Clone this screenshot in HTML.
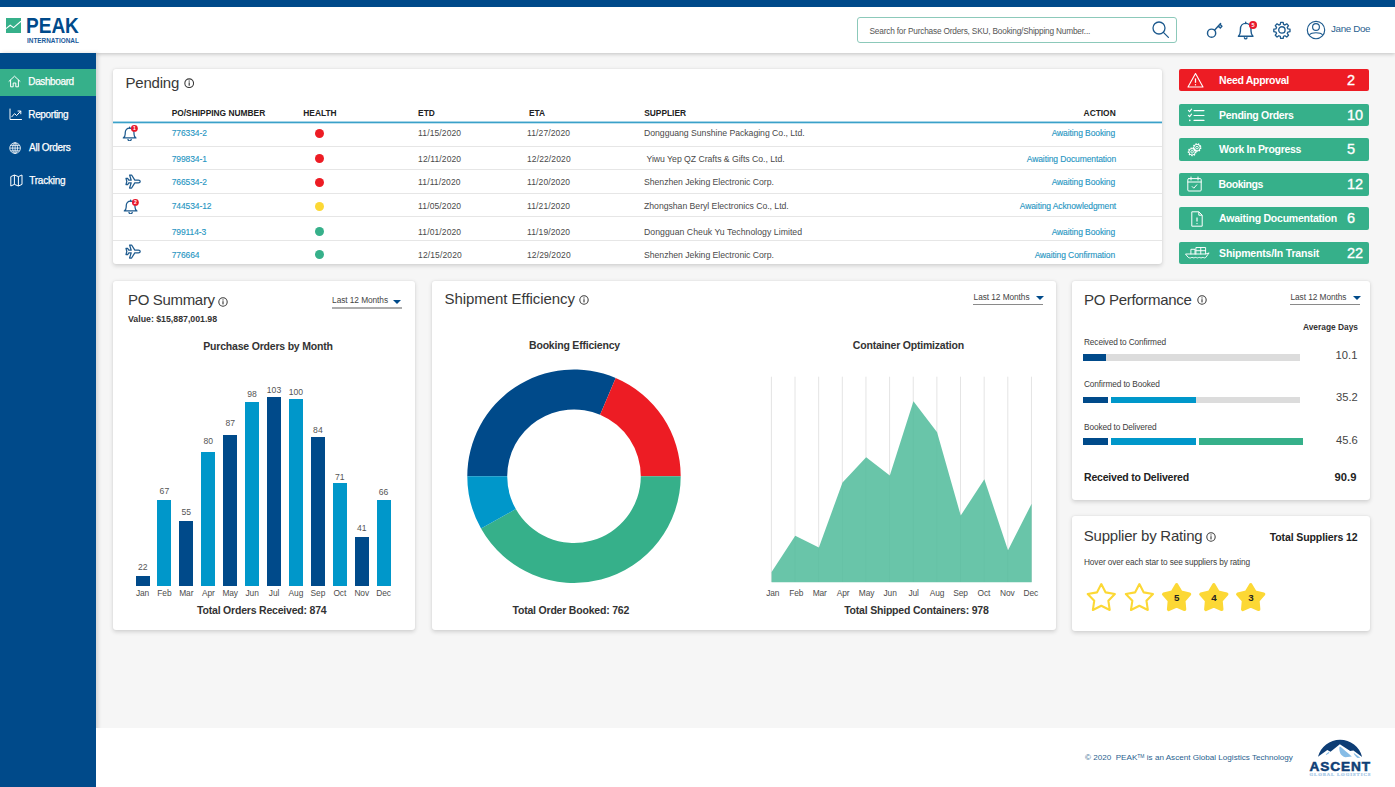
<!DOCTYPE html>
<html>
<head>
<meta charset="utf-8">
<title>PEAK Dashboard</title>
<style>
*{box-sizing:border-box;margin:0;padding:0}
html,body{width:1395px;height:787px;overflow:hidden}
body{position:relative;background:#f6f6f6;font-family:"Liberation Sans",sans-serif;color:#333;font-size:8px}
.a{position:absolute}
.t{position:absolute;white-space:nowrap;line-height:1;transform:translateY(-50%)}
.tr{position:absolute;white-space:nowrap;line-height:1;transform:translate(-100%,-50%)}
.tc{position:absolute;white-space:nowrap;line-height:1;transform:translate(-50%,-50%)}
.b{font-weight:bold}
.card{position:absolute;background:#fff;border-radius:3px;box-shadow:0 1.5px 4px rgba(0,0,0,.15),0 0 2px rgba(0,0,0,.06)}
#topbar{left:0;top:0;width:1395px;height:7px;background:#004a8a}
#header{left:0;top:7px;width:1395px;height:46px;background:#fff;box-shadow:0 1px 4px rgba(0,0,0,.22)}
#sidebar{left:0;top:53px;width:96px;height:734px;background:#004a8a;box-shadow:1.5px 0 4px rgba(0,0,0,.15)}
#navact{left:0;top:69px;width:96px;height:27px;background:#36b08a}
.nav{color:#fff;font-size:10px;left:28.3px;letter-spacing:-.38px;-webkit-text-stroke:.25px #fff;margin-top:.3px}
#footer{left:96px;top:728px;width:1299px;height:59px;background:#fff}
.h1{font-size:15px;color:#383838;letter-spacing:-.2px}
.th{font-size:8.4px;font-weight:bold;color:#222;margin-top:.4px}
.td{font-size:8.5px;color:#4a4a4a;margin-top:.1px;letter-spacing:-.05px}
.dt{letter-spacing:.12px}
.su{font-size:8.7px;letter-spacing:-.03px}
.po{letter-spacing:-.27px}
.lk{font-size:8.5px;color:#1f95c2;margin-top:.1px;letter-spacing:-.1px;-webkit-text-stroke:.12px #1f95c2}
.sep{position:absolute;left:113px;width:1049px;height:1.4px;background:#e6e6e6;margin-top:-.3px}
.dot{position:absolute;width:9px;height:9px;border-radius:50%;left:315px}
.btn{position:absolute;left:1178.5px;width:190.7px;height:22.8px;border-radius:2px;background:#36b08a}
.btn .t{color:#fff;top:10.9px}
.bl{left:40.6px;font-size:10.5px;font-weight:bold;letter-spacing:-.3px}
.bn{left:168.4px;font-size:14.5px;-webkit-text-stroke:.35px #fff}
.sel{font-size:8.3px;color:#444;margin-top:.4px;margin-left:.3px;letter-spacing:-.06px}
.ul{position:absolute;height:1.2px;background:#8a8a8a;margin-top:.5px}
.tri{position:absolute;width:0;height:0;border-left:4px solid transparent;border-right:4px solid transparent;border-top:4.6px solid #004a8a;margin-top:-3px;margin-left:1.4px}
.ct{font-size:10.5px;font-weight:bold;color:#333;letter-spacing:-.2px;margin-top:-.5px}
.mo{font-size:8.4px;color:#4c4c4c;letter-spacing:-.1px}
.bv{font-size:8.6px;color:#555}
.bar{position:absolute;width:14px}
.db{background:#004a8a}
.lb{background:#0097ca}
</style>
</head>
<body>
<div class="a" id="header"></div>
<div class="a" id="topbar"></div>
<div class="a" id="sidebar"></div>
<div class="a" id="navact"></div>
<div class="a" id="footer"></div>

<!-- LOGO -->
<svg class="a" style="left:6px;top:18px" width="15" height="15" viewBox="0 0 15 15"><rect width="15" height="15" fill="#36b08a"/><path d="M0 10.6 L4.2 7.2 L7.6 9.6 L15 3.2" fill="none" stroke="#fff" stroke-width="1.1"/></svg>
<div class="a b" id="peak" style="left:26px;top:14.2px;font-size:21.5px;line-height:21.5px;color:#004a8a;white-space:nowrap;transform:scaleX(.885);transform-origin:0 0;left:25.6px;top:15.9px">PEAK</div>
<div class="a b" id="intl" style="left:26.8px;top:36.9px;font-size:7px;line-height:7px;color:#1a5a9a;white-space:nowrap;transform:scaleX(.915);transform-origin:0 0">INTERNATIONAL</div>
<!-- NAV -->
<div class="t nav" style="top:82px">Dashboard</div>
<div class="t nav" style="top:115px">Reporting</div>
<div class="t nav" style="top:148px;left:29.1px;letter-spacing:-.3px">All Orders</div>
<div class="t nav" style="top:181px;left:29.2px;letter-spacing:-.22px">Tracking</div>
<svg class="a" style="left:8px;top:75px" width="13" height="13" viewBox="0 0 13 13" fill="none" stroke="#fff" stroke-width="1" stroke-linejoin="round" stroke-linecap="round"><path d="M1 6.3 L6.5 1.2 L12 6.3"/><path d="M2.6 5.2 V11.8 H5.2 V8 H7.8 V11.8 H10.4 V5.2"/></svg>
<svg class="a" style="left:9px;top:108px" width="13" height="13" viewBox="0 0 13 13" fill="none" stroke="#fff" stroke-width="1" stroke-linejoin="round" stroke-linecap="round"><path d="M1 1 V11.5 H12.5"/><path d="M2.8 8.8 L5.6 5.6 L7.6 7.6 L11.6 3.2"/><path d="M9 3 H11.8 V5.8"/></svg>
<svg class="a" style="left:8.6px;top:141.6px" width="12.2" height="12.2" viewBox="0 0 13 13" fill="none" stroke="#fff" stroke-width=".85"><circle cx="6.5" cy="6.5" r="5.7"/><ellipse cx="6.5" cy="6.5" rx="2.6" ry="5.7"/><path d="M6.5 .8 V12.2 M.8 6.5 H12.2 M1.6 3.6 H11.4 M1.6 9.4 H11.4"/></svg>
<svg class="a" style="left:10px;top:174px" width="13" height="13" viewBox="0 0 13 13" fill="none" stroke="#fff" stroke-width="1" stroke-linejoin="round"><path d="M.8 2.6 L4.4 1 L8.4 2.6 L12 1 V10.4 L8.4 12 L4.4 10.4 L.8 12 Z"/><path d="M4.4 1 V10.4 M8.4 2.6 V12"/></svg>
<!-- HEADER-RIGHT -->
<div class="a" style="left:857px;top:17px;width:320px;height:26px;border:1px solid #8cc9ba;border-radius:3px;background:#fff"></div>
<div class="t" style="left:869.5px;top:30.5px;font-size:8.3px;color:#555;letter-spacing:-.2px">Search for Purchase Orders, SKU, Booking/Shipping Number...</div>
<svg class="a" style="left:1151px;top:20px" width="19" height="19" viewBox="0 0 19 19" fill="none" stroke="#1d5a8e" stroke-width="1.3" stroke-linecap="round"><circle cx="8" cy="8" r="6"/><path d="M12.4 12.4 L17.4 17.4"/></svg>
<svg class="a" style="left:1206px;top:20.5px" width="18" height="18" viewBox="0 0 18 18" fill="none" stroke="#1d5a8e" stroke-width="1.45" stroke-linecap="round" stroke-linejoin="round"><circle cx="5.6" cy="12.2" r="4.1"/><path d="M8.5 9.3 L14.6 2.6 M12.4 5 L14.3 6.9 L15.9 5.2 L14 3.3"/></svg>
<svg class="a" style="left:1237.2px;top:20.6px" width="19.4" height="19" viewBox="0 0 19 19" fill="none" stroke="#1d5a8e" stroke-width="1.4" stroke-linecap="round" stroke-linejoin="round"><path d="M1.2 15.2 H15.8 C14.4 13.8 13.8 12.2 13.8 10 V8.4 C13.8 4.8 11.6 2.4 8.5 2.4 C5.4 2.4 3.2 4.8 3.2 8.4 V10 C3.2 12.2 2.6 13.8 1.2 15.2 Z"/><path d="M7.2 16.8 C7.6 18.2 9.4 18.2 9.8 16.8 M8.5 2.6 V1.2"/></svg>
<svg class="a" style="left:1248.0px;top:20.0px" width="10.0" height="10.0" viewBox="0 0 10.0 10.0"><circle cx="5.00" cy="5.00" r="4" fill="#e8182a"/><text x="5.00" y="7.02" text-anchor="middle" font-family="Liberation Sans, sans-serif" font-weight="bold" font-size="5.6" fill="#fff">5</text></svg>

<svg class="a" style="left:1272.8px;top:20.9px" width="17.8" height="17.8" viewBox="0 0 24 24" fill="none" stroke="#1d5a8e" stroke-width="1.8" stroke-linejoin="round"><circle cx="12" cy="12" r="4.3"/><path d="M10.3 1.8 h3.4 l.5 2.9 l1.9 .8 l2.4 -1.7 l2.4 2.4 l-1.7 2.4 l.8 1.9 l2.9 .5 v3.4 l-2.9 .5 l-.8 1.9 l1.7 2.4 l-2.4 2.4 l-2.4 -1.7 l-1.9 .8 l-.5 2.9 h-3.4 l-.5 -2.9 l-1.9 -.8 l-2.4 1.7 l-2.4 -2.4 l1.7 -2.4 l-.8 -1.9 l-2.9 -.5 v-3.4 l2.9 -.5 l.8 -1.9 l-1.7 -2.4 l2.4 -2.4 l2.4 1.7 l1.9 -.8 z"/></svg>
<svg class="a" style="left:1306.1px;top:19.7px" width="20" height="20" viewBox="0 0 20 20" fill="none" stroke="#1d5a8e" stroke-width="1.15"><circle cx="10" cy="10" r="8.7"/><circle cx="10" cy="7" r="3.4"/><path d="M3.5 14.9 C5.6 12 14.4 12 16.5 14.9"/></svg>
<div class="t" style="left:1331px;top:29.4px;font-size:9.8px;color:#2a5f8f;letter-spacing:-.35px">Jane Doe</div>
<!-- PENDING -->
<div class="card" style="left:113px;top:69px;width:1049px;height:195px"></div>
<div class="t h1" style="left:125.5px;top:82.1px">Pending</div>
<svg class="a" style="left:184px;top:78.1px" width="10.4" height="10.4" viewBox="0 0 10 10"><circle cx="5" cy="5" r="4.2" fill="none" stroke="#3a3a3a" stroke-width="1.05"/><rect x="4.45" y="4.2" width="1.1" height="3.2" fill="#333"/><rect x="4.45" y="2.4" width="1.1" height="1.1" fill="#333"/></svg>
<div class="t th" style="left:171.7px;top:112.3px">PO/SHIPPING NUMBER</div>
<div class="t th" style="left:303.3px;top:112.3px">HEALTH</div>
<div class="t th" style="left:418.1px;top:112.3px">ETD</div>
<div class="t th" style="left:529px;top:112.3px">ETA</div>
<div class="t th" style="left:644.2px;top:112.3px">SUPPLIER</div>
<div class="tr th" style="left:1115.7px;top:112.3px">ACTION</div>
<svg class="a" style="left:113px;top:120px" width="1049" height="5" viewBox="0 0 1049 5"><rect x="0" y="1.55" width="1049" height="1.75" fill="#3aa1c9"/></svg>
<div class="sep" style="top:145.8px"></div>
<div class="sep" style="top:169.3px"></div>
<div class="sep" style="top:192.8px"></div>
<div class="sep" style="top:216.3px"></div>
<div class="sep" style="top:239.8px"></div>
<svg class="a" style="left:122px;top:125.6px" width="17" height="15.6" preserveAspectRatio="none" viewBox="0 0 19 19" fill="none" stroke="#1d5a8e" stroke-width="1.4" stroke-linecap="round" stroke-linejoin="round"><path d="M1.4 14.5 H15.6 C14 13.3 13.4 11.9 13.4 9.7 V8.2 C13.4 4.8 11.4 2.6 8.5 2.6 C5.6 2.6 3.6 4.8 3.6 8.2 V9.7 C3.6 11.9 3 13.3 1.4 14.5 Z"/><path d="M6.7 16.3 C7.1 18.6 9.9 18.6 10.3 16.3 M8.5 2.6 V1.4"/></svg>
<svg class="a" style="left:130.1px;top:124.3px" width="8.8" height="8.8" viewBox="0 0 8.8 8.8"><circle cx="4.40" cy="4.40" r="3.4" fill="#e8182a"/><text x="4.40" y="6.20" text-anchor="middle" font-family="Liberation Sans, sans-serif" font-weight="bold" font-size="5" fill="#fff">1</text></svg>

<div class="t lk po" style="left:171.7px;top:133.1px">776334-2</div>
<div class="dot" style="top:129.0px;background:#ed1c24"></div>
<div class="t td dt" style="left:418.1px;top:133.1px">11/15/2020</div>
<div class="t td dt" style="left:527px;top:133.1px">11/27/2020</div>
<div class="t td su" style="left:644px;top:133.1px">Dongguang Sunshine Packaging Co., Ltd.</div>
<div class="tr lk" style="left:1115.1px;top:133.1px">Awaiting Booking</div>
<div class="t lk po" style="left:171.7px;top:158.9px">799834-1</div>
<div class="dot" style="top:153.8px;background:#ed1c24"></div>
<div class="t td dt" style="left:418.1px;top:158.9px">12/11/2020</div>
<div class="t td dt" style="left:527px;top:158.9px">12/22/2020</div>
<div class="t td su" style="left:646.5px;top:158.9px">Yiwu Yep QZ Crafts &amp; Gifts Co., Ltd.</div>
<div class="tr lk" style="left:1116.1px;top:158.9px">Awaiting Documentation</div>
<svg class="a" style="left:125px;top:173.7px" width="16" height="15" viewBox="0 0 16 15" fill="none" stroke="#1d5a8e" stroke-width="1.25" stroke-linejoin="round"><path d="M1 4.4 H2.6 L3.8 6.2 H6.2 L4.6 1 H6.6 L9.8 6.2 H13.4 C14.6 6.2 15.2 6.9 15.2 7.5 C15.2 8.1 14.6 8.8 13.4 8.8 H9.8 L6.6 14 H4.6 L6.2 8.8 H3.8 L2.6 10.6 H1 L1.8 7.5 Z"/></svg>
<div class="t lk po" style="left:171.7px;top:182px">766534-2</div>
<div class="dot" style="top:177.5px;background:#ed1c24"></div>
<div class="t td dt" style="left:418.1px;top:182px">11/11/2020</div>
<div class="t td dt" style="left:527px;top:182px">11/20/2020</div>
<div class="t td su" style="left:644px;top:182px">Shenzhen Jeking Electronic Corp.</div>
<div class="tr lk" style="left:1115.1px;top:182px">Awaiting Booking</div>
<svg class="a" style="left:123.3px;top:198.6px" width="17" height="15.6" preserveAspectRatio="none" viewBox="0 0 19 19" fill="none" stroke="#1d5a8e" stroke-width="1.4" stroke-linecap="round" stroke-linejoin="round"><path d="M1.4 14.5 H15.6 C14 13.3 13.4 11.9 13.4 9.7 V8.2 C13.4 4.8 11.4 2.6 8.5 2.6 C5.6 2.6 3.6 4.8 3.6 8.2 V9.7 C3.6 11.9 3 13.3 1.4 14.5 Z"/><path d="M6.7 16.3 C7.1 18.6 9.9 18.6 10.3 16.3 M8.5 2.6 V1.4"/></svg>
<svg class="a" style="left:131.4px;top:197.7px" width="8.8" height="8.8" viewBox="0 0 8.8 8.8"><circle cx="4.40" cy="4.40" r="3.4" fill="#e8182a"/><text x="4.40" y="6.20" text-anchor="middle" font-family="Liberation Sans, sans-serif" font-weight="bold" font-size="5" fill="#fff">2</text></svg>

<div class="t lk po" style="left:171.7px;top:206.4px">744534-12</div>
<div class="dot" style="top:201.9px;background:#fcd835"></div>
<div class="t td dt" style="left:418.1px;top:206.4px">11/05/2020</div>
<div class="t td dt" style="left:527px;top:206.4px">11/21/2020</div>
<div class="t td su" style="left:644px;top:206.4px">Zhongshan Beryl Electronics Co., Ltd.</div>
<div class="tr lk" style="left:1116.1px;top:206.4px">Awaiting Acknowledgment</div>
<div class="t lk po" style="left:171.7px;top:231.8px">799114-3</div>
<div class="dot" style="top:226.7px;background:#36b08a"></div>
<div class="t td dt" style="left:418.1px;top:231.8px">11/01/2020</div>
<div class="t td dt" style="left:527px;top:231.8px">11/19/2020</div>
<div class="t td su" style="left:644px;top:231.8px"><span style="letter-spacing:.04px">Dongguan Cheuk Yu Technology Limited</span></div>
<div class="tr lk" style="left:1115.1px;top:231.8px">Awaiting Booking</div>
<svg class="a" style="left:125px;top:244.2px" width="16" height="15" viewBox="0 0 16 15" fill="none" stroke="#1d5a8e" stroke-width="1.25" stroke-linejoin="round"><path d="M1 4.4 H2.6 L3.8 6.2 H6.2 L4.6 1 H6.6 L9.8 6.2 H13.4 C14.6 6.2 15.2 6.9 15.2 7.5 C15.2 8.1 14.6 8.8 13.4 8.8 H9.8 L6.6 14 H4.6 L6.2 8.8 H3.8 L2.6 10.6 H1 L1.8 7.5 Z"/></svg>
<div class="t lk po" style="left:171.7px;top:254.7px">776664</div>
<div class="dot" style="top:250.2px;background:#36b08a"></div>
<div class="t td dt" style="left:418.1px;top:254.7px">12/15/2020</div>
<div class="t td dt" style="left:527px;top:254.7px">12/29/2020</div>
<div class="t td su" style="left:644px;top:254.7px">Shenzhen Jeking Electronic Corp.</div>
<div class="tr lk" style="left:1115.1px;top:254.7px">Awaiting Confirmation</div>
<!-- BUTTONS -->
<div class="btn" style="top:68.7px;background:#ed1c24"><svg class="a" style="left:8px;top:3px" width="17" height="17" viewBox="0 0 17 17" fill="none" stroke="#fff" stroke-width="1.1" stroke-linejoin="round"><path d="M8.5 1.6 L16 15 H1 Z"/><path d="M8.5 6.4 V10.8" stroke-width="1.3"/><circle cx="8.5" cy="12.8" r=".7" fill="#fff" stroke="none"/></svg><div class="t bl">Need Approval</div><div class="t bn">2</div></div>
<div class="btn" style="top:103.7px"><svg class="a" style="left:8px;top:4px" width="18" height="15" viewBox="0 0 18 15" fill="none" stroke="#fff" stroke-width="1.1" stroke-linecap="round" stroke-linejoin="round"><path d="M7 2.6 H17 M7 7.5 H17 M7 12.4 H17"/><path d="M1.4 2.4 L2.6 3.6 L4.6 1.2 M1.4 7.4 L2.6 8.6 L4.6 6.2"/><circle cx="2.8" cy="12.4" r=".8" fill="#fff" stroke="none"/></svg><div class="t bl">Pending Orders</div><div class="t bn">10</div></div>
<div class="btn" style="top:138px"><svg class="a" style="left:8px;top:4px" width="16" height="16" viewBox="0 0 16 16" fill="none" stroke="#fff" stroke-width="1.4" stroke-dasharray="1.5 1.05"><circle cx="10" cy="5.6" r="3.7"/><circle cx="5.1" cy="9.8" r="3.7"/></svg><svg class="a" style="left:8px;top:4px" width="16" height="16" viewBox="0 0 16 16" fill="none" stroke="#fff" stroke-width=".9"><circle cx="10" cy="5.6" r="3.2"/><circle cx="5.1" cy="9.8" r="3.2"/><circle cx="10" cy="5.6" r="1.3"/><circle cx="5.1" cy="9.8" r="1.3"/></svg><div class="t bl">Work In Progress</div><div class="t bn">5</div></div>
<div class="btn" style="top:172.8px"><svg class="a" style="left:8.8px;top:3.3px" width="15" height="16" viewBox="0 0 15 16" fill="none" stroke="#fff" stroke-width="1" stroke-linejoin="round" stroke-linecap="round"><rect x=".8" y="2.6" width="13.4" height="12.4" rx="1"/><path d="M.8 6 H14.2 M4 1 V4 M11 1 V4"/><path d="M5.2 10.6 L6.8 12.2 L9.8 8.8"/></svg><div class="t bl" style="left:40.1px;letter-spacing:-.44px">Bookings</div><div class="t bn">12</div></div>
<div class="btn" style="top:207.2px"><svg class="a" style="left:12.3px;top:3.5px" width="12" height="16" viewBox="0 0 12 16" fill="none" stroke="#fff" stroke-width="1" stroke-linejoin="round"><path d="M.8 .8 H7.8 L11.2 4.2 V15.2 H.8 Z"/><path d="M7.8 .8 V4.2 H11.2"/><path d="M6 6.4 V10.6" stroke-width="1.2"/><circle cx="6" cy="12.6" r=".7" fill="#fff" stroke="none"/></svg><div class="t bl" style="letter-spacing:-.23px">Awaiting Documentation</div><div class="t bn">6</div></div>
<div class="btn" style="top:241.7px"><svg class="a" style="left:6px;top:4px" width="25" height="15" viewBox="0 0 25 15" fill="none" stroke="#fff" stroke-width=".95" stroke-linejoin="round" stroke-linecap="round"><path d="M.9 8 H20.8 L24.1 6.9 L20.6 11.6 C19.4 12.6 18.2 10.8 17 11.6 C15.8 12.6 14.6 10.8 13.4 11.6 C12.2 12.6 11 10.8 9.8 11.6 C8.6 12.6 7.4 10.8 6.2 11.6 C5.2 12.4 4.2 11.8 3.4 11.4 Z"/><path d="M5.9 8 V3.3 H10 V8 M10.9 8 V1.5 H20.6 V7.9 M10.9 4.7 H20.6 M15.75 1.5 V8"/></svg><div class="t bl" style="letter-spacing:-.17px">Shipments/In Transit</div><div class="t bn">22</div></div>
<!-- POSUMMARY -->
<div class="card" style="left:113px;top:281px;width:302px;height:349px"></div>
<div class="t h1" style="left:128px;top:298.7px;letter-spacing:-.33px">PO Summary</div>
<svg class="a" style="left:218.2px;top:296.5px" width="10" height="10" viewBox="0 0 10 10"><circle cx="5" cy="5" r="4.2" fill="none" stroke="#3a3a3a" stroke-width="1.05"/><rect x="4.45" y="4.2" width="1.1" height="3.2" fill="#333"/><rect x="4.45" y="2.4" width="1.1" height="1.1" fill="#333"/></svg>
<div class="t b" style="left:128px;top:319px;font-size:8.8px;color:#333;letter-spacing:-.02px">Value: $15,887,001.98</div>
<div class="t sel" style="left:331.8px;top:299.8px">Last 12 Months</div>
<div class="ul" style="left:331.6px;top:306.6px;width:70.2px;height:1.8px;background:#adadad"></div>
<div class="tri" style="left:391.6px;top:302.6px"></div>
<div class="tc ct" style="left:268px;top:346.4px">Purchase Orders by Month</div>
<div class="bar db" style="left:135.5px;top:575.7px;height:10.3px"></div><div class="tc bv" style="left:142.7px;top:566.9px">22</div><div class="tc mo" style="left:142.5px;top:593.3px">Jan</div>
<div class="bar lb" style="left:157.4px;top:500px;height:86.0px"></div><div class="tc bv" style="left:164.4px;top:490.5px">67</div><div class="tc mo" style="left:164.4px;top:593.3px">Feb</div>
<div class="bar db" style="left:179.3px;top:520.6px;height:65.4px"></div><div class="tc bv" style="left:186.3px;top:511.5px">55</div><div class="tc mo" style="left:186.3px;top:593.3px">Mar</div>
<div class="bar lb" style="left:201.3px;top:452px;height:134.0px"></div><div class="tc bv" style="left:208.3px;top:441.3px">80</div><div class="tc mo" style="left:208.3px;top:593.3px">Apr</div>
<div class="bar db" style="left:223.2px;top:434.6px;height:151.4px"></div><div class="tc bv" style="left:230.2px;top:422.9px">87</div><div class="tc mo" style="left:230.2px;top:593.3px">May</div>
<div class="bar lb" style="left:245.1px;top:402.1px;height:183.9px"></div><div class="tc bv" style="left:252.1px;top:394.2px">98</div><div class="tc mo" style="left:252.1px;top:593.3px">Jun</div>
<div class="bar db" style="left:267.0px;top:397px;height:189.0px"></div><div class="tc bv" style="left:274.0px;top:390.1px">103</div><div class="tc mo" style="left:274.0px;top:593.3px">Jul</div>
<div class="bar lb" style="left:288.9px;top:399.3px;height:186.7px"></div><div class="tc bv" style="left:295.9px;top:392.4px">100</div><div class="tc mo" style="left:295.9px;top:593.3px">Aug</div>
<div class="bar db" style="left:310.9px;top:436.5px;height:149.5px"></div><div class="tc bv" style="left:317.9px;top:430.2px">84</div><div class="tc mo" style="left:317.9px;top:593.3px">Sep</div>
<div class="bar lb" style="left:332.8px;top:482.6px;height:103.4px"></div><div class="tc bv" style="left:339.8px;top:476.6px">71</div><div class="tc mo" style="left:339.8px;top:593.3px">Oct</div>
<div class="bar db" style="left:354.7px;top:536.6px;height:49.4px"></div><div class="tc bv" style="left:361.7px;top:528.4px">41</div><div class="tc mo" style="left:361.7px;top:593.3px">Nov</div>
<div class="bar lb" style="left:376.6px;top:500px;height:86.0px"></div><div class="tc bv" style="left:383.6px;top:491.8px">66</div><div class="tc mo" style="left:383.6px;top:593.3px">Dec</div>
<div class="tc ct" style="left:261.8px;top:610.5px">Total Orders Received: 874</div>
<!-- SHIPMENT -->
<div class="card" style="left:431.5px;top:281px;width:624.7px;height:349px"></div>
<div class="t h1" style="left:444.5px;top:297.8px;letter-spacing:-.05px">Shipment Efficiency</div>
<svg class="a" style="left:578.5px;top:294.7px" width="10" height="10" viewBox="0 0 10 10"><circle cx="5" cy="5" r="4.2" fill="none" stroke="#3a3a3a" stroke-width="1.05"/><rect x="4.45" y="4.2" width="1.1" height="3.2" fill="#333"/><rect x="4.45" y="2.4" width="1.1" height="1.1" fill="#333"/></svg>
<div class="t sel" style="left:973.3px;top:297px">Last 12 Months</div>
<div class="ul" style="left:973.3px;top:303.3px;width:69.8px"></div>
<div class="tri" style="left:1034.4px;top:299.2px"></div>
<div class="tc ct" style="left:574.5px;top:345.3px">Booking Efficiency</div>
<svg class="a" style="left:0;top:0" width="1395" height="787" viewBox="0 0 1395 787"><path d="M467.30 476.20 A106.7 106.7 0 0 1 615.69 377.98 L600.10 414.71 A66.8 66.8 0 0 0 507.20 476.20 Z" fill="#004a8a"/><path d="M615.69 377.98 A106.7 106.7 0 0 1 680.70 476.20 L640.80 476.20 A66.8 66.8 0 0 0 600.10 414.71 Z" fill="#ed1c24"/><path d="M680.70 476.20 A106.7 106.7 0 0 1 481.04 528.58 L515.80 508.99 A66.8 66.8 0 0 0 640.80 476.20 Z" fill="#36b08a"/><path d="M481.04 528.58 A106.7 106.7 0 0 1 467.30 476.20 L507.20 476.20 A66.8 66.8 0 0 0 515.80 508.99 Z" fill="#0097ca"/><path d="M771.40 376.7 V582" stroke="#e4e4e4" stroke-width="1" fill="none"/><path d="M795.04 376.7 V582" stroke="#e4e4e4" stroke-width="1" fill="none"/><path d="M818.68 376.7 V582" stroke="#e4e4e4" stroke-width="1" fill="none"/><path d="M842.32 376.7 V582" stroke="#e4e4e4" stroke-width="1" fill="none"/><path d="M865.96 376.7 V582" stroke="#e4e4e4" stroke-width="1" fill="none"/><path d="M889.60 376.7 V582" stroke="#e4e4e4" stroke-width="1" fill="none"/><path d="M913.24 376.7 V582" stroke="#e4e4e4" stroke-width="1" fill="none"/><path d="M936.88 376.7 V582" stroke="#e4e4e4" stroke-width="1" fill="none"/><path d="M960.52 376.7 V582" stroke="#e4e4e4" stroke-width="1" fill="none"/><path d="M984.16 376.7 V582" stroke="#e4e4e4" stroke-width="1" fill="none"/><path d="M1007.80 376.7 V582" stroke="#e4e4e4" stroke-width="1" fill="none"/><path d="M1031.44 376.7 V582" stroke="#e4e4e4" stroke-width="1" fill="none"/><path d="M771.60 582.2 L771.60 571.9 L795.24 535.7 L818.88 547.4 L842.52 482.5 L866.16 457.2 L889.80 475.5 L913.44 401.2 L937.08 432.2 L960.72 515.5 L984.36 479.3 L1008.00 550.3 L1031.64 503.7 L1031.64 582.2 Z" fill="#4fbb9a" fill-opacity=".85"/></svg>
<div class="tc mo" style="left:772.8px;top:593.3px">Jan</div><div class="tc mo" style="left:796.3px;top:593.3px">Feb</div><div class="tc mo" style="left:819.7px;top:593.3px">Mar</div><div class="tc mo" style="left:843.2px;top:593.3px">Apr</div><div class="tc mo" style="left:866.6px;top:593.3px">May</div><div class="tc mo" style="left:890.1px;top:593.3px">Jun</div><div class="tc mo" style="left:913.6px;top:593.3px">Jul</div><div class="tc mo" style="left:937.0px;top:593.3px">Aug</div><div class="tc mo" style="left:960.5px;top:593.3px">Sep</div><div class="tc mo" style="left:983.9px;top:593.3px">Oct</div><div class="tc mo" style="left:1007.4px;top:593.3px">Nov</div><div class="tc mo" style="left:1030.9px;top:593.3px">Dec</div>
<div class="tc ct" style="left:570.8px;top:610.5px">Total Order Booked: 762</div>
<div class="tc ct" style="left:908.4px;top:345.3px">Container Optimization</div>
<div class="tc ct" style="left:916.4px;top:610.5px">Total Shipped Containers: 978</div>
<!-- POPERF -->
<div class="card" style="left:1072px;top:281px;width:298px;height:218.5px"></div>
<div class="t h1" style="left:1084px;top:298.9px;letter-spacing:-.3px">PO Performance</div>
<svg class="a" style="left:1197px;top:295.1px" width="10" height="10" viewBox="0 0 10 10"><circle cx="5" cy="5" r="4.2" fill="none" stroke="#3a3a3a" stroke-width="1.05"/><rect x="4.45" y="4.2" width="1.1" height="3.2" fill="#333"/><rect x="4.45" y="2.4" width="1.1" height="1.1" fill="#333"/></svg>
<div class="t sel" style="left:1290.2px;top:297px">Last 12 Months</div>
<div class="ul" style="left:1290.2px;top:303.3px;width:70.2px"></div>
<div class="tri" style="left:1351.7px;top:299.2px"></div>
<div class="tr b" style="left:1358px;top:327.3px;font-size:8.4px;color:#333">Average Days</div>
<div class="t" style="left:1084px;top:342.1px;font-size:8.3px;color:#3c3c3c;letter-spacing:-.12px">Received to Confirmed</div>
<div class="a" style="left:1106.3px;top:354.2px;width:193.7px;height:6.4px;background:#dcdcdc"></div><div class="a" style="left:1082.6px;top:354.2px;width:23.7px;height:6.4px;background:#004a8a"></div>
<div class="tr" style="left:1357.4px;top:356px;font-size:11.2px;color:#444">10.1</div>
<div class="t" style="left:1084px;top:383.9px;font-size:8.3px;color:#3c3c3c;letter-spacing:-.12px">Confirmed to Booked</div>
<div class="a" style="left:1196.4px;top:396.6px;width:103.6px;height:6.4px;background:#dcdcdc"></div><div class="a" style="left:1082.6px;top:396.6px;width:25.6px;height:6.4px;background:#004a8a"></div><div class="a" style="left:1110.6px;top:396.6px;width:85.8px;height:6.4px;background:#0097ca"></div>
<div class="tr" style="left:1357.8px;top:398.3px;font-size:11.2px;color:#444">35.2</div>
<div class="t" style="left:1084px;top:426.7px;font-size:8.3px;color:#3c3c3c;letter-spacing:-.12px">Booked to Delivered</div>
<div class="a" style="left:1082.6px;top:438.4px;width:25.6px;height:6.4px;background:#004a8a"></div><div class="a" style="left:1110.6px;top:438.4px;width:85.8px;height:6.4px;background:#0097ca"></div><div class="a" style="left:1198.6px;top:438.4px;width:104.3px;height:6.4px;background:#36b08a"></div>
<div class="tr" style="left:1357.8px;top:441px;font-size:11.2px;color:#444">45.6</div>
<div class="t ct" style="left:1084px;top:477.2px;color:#222">Received to Delivered</div>
<div class="tr ct" style="left:1356.4px;top:478.3px;color:#222;font-size:11.2px;letter-spacing:0">90.9</div>
<!-- RATING -->
<div class="card" style="left:1072px;top:516px;width:298px;height:114.5px"></div>
<div class="t h1" style="left:1083.8px;top:535px;letter-spacing:-.22px">Supplier by Rating</div>
<svg class="a" style="left:1206.3px;top:532.3px" width="10" height="10" viewBox="0 0 10 10"><circle cx="5" cy="5" r="4.2" fill="none" stroke="#3a3a3a" stroke-width="1.05"/><rect x="4.45" y="4.2" width="1.1" height="3.2" fill="#333"/><rect x="4.45" y="2.4" width="1.1" height="1.1" fill="#333"/></svg>
<div class="tr ct" style="left:1357.6px;top:537.3px;color:#222;letter-spacing:-.1px">Total Suppliers 12</div>
<div class="t" style="left:1084px;top:561.7px;font-size:8.3px;color:#3c3c3c;letter-spacing:-.12px">Hover over each star to see suppliers by rating</div>
<svg class="a" style="left:0;top:0" width="1395" height="787" viewBox="0 0 1395 787"><polygon points="1101.30,584.10 1105.65,592.41 1114.90,593.98 1108.34,600.69 1109.71,609.97 1101.30,605.80 1092.89,609.97 1094.26,600.69 1087.70,593.98 1096.95,592.41" fill="#fff" stroke="#fcd835" stroke-width="2.1" stroke-linejoin="round"/><polygon points="1139.40,584.10 1143.75,592.41 1153.00,593.98 1146.44,600.69 1147.81,609.97 1139.40,605.80 1130.99,609.97 1132.36,600.69 1125.80,593.98 1135.05,592.41" fill="#fff" stroke="#fcd835" stroke-width="2.1" stroke-linejoin="round"/><polygon points="1176.60,584.80 1181.07,592.25 1189.53,594.20 1183.83,600.75 1184.59,609.40 1176.60,606.00 1168.61,609.40 1169.37,600.75 1163.67,594.20 1172.13,592.25" fill="#fcd835" stroke="#fcd835" stroke-width="3.4" stroke-linejoin="round"/><polygon points="1213.80,584.80 1218.27,592.25 1226.73,594.20 1221.03,600.75 1221.79,609.40 1213.80,606.00 1205.81,609.40 1206.57,600.75 1200.87,594.20 1209.33,592.25" fill="#fcd835" stroke="#fcd835" stroke-width="3.4" stroke-linejoin="round"/><polygon points="1250.70,584.80 1255.17,592.25 1263.63,594.20 1257.93,600.75 1258.69,609.40 1250.70,606.00 1242.71,609.40 1243.47,600.75 1237.77,594.20 1246.23,592.25" fill="#fcd835" stroke="#fcd835" stroke-width="3.4" stroke-linejoin="round"/></svg>
<div class="tc b" style="left:1176.8px;top:597.8px;font-size:9.8px;color:#222">5</div><div class="tc b" style="left:1214.0px;top:597.8px;font-size:9.8px;color:#222">4</div><div class="tc b" style="left:1250.9px;top:597.8px;font-size:9.8px;color:#222">3</div>
<!-- FOOTER -->
<div class="t" style="left:1085px;top:757.8px;font-size:8.1px;color:#2a5f8f">&copy; 2020&nbsp; PEAK<span style="font-size:5px;vertical-align:2.5px">TM</span> is an Ascent Global Logistics Technology</div>
<svg class="a" style="left:1309px;top:739px" width="64" height="40" viewBox="0 0 64 40">
<path d="M8.98 17.8 A22.8 22.8 0 0 1 53.13 17.9 L44.4 11.4 L41.2 12.1 L30.85 5.2 L21.5 12.7 L18.3 11.1 Z" fill="#0d3d75"/>
<path d="M30.45 7.8 C29.9 12.6 31.5 17.2 36.4 18.3 L42.9 17.6 L31.5 7.7 Z" fill="#86bce6"/>
<path d="M44.6 13.8 L51.3 18.7 L48.6 18.9 C46.8 18 45.3 16.2 44.6 13.8 Z" fill="#86bce6"/>
<path d="M19.9 12.8 L20.3 13.9 L17.2 16 L16.8 15.2 Z" fill="#86bce6"/>
<text transform="translate(.45 31.8) scale(1.1 1)" font-family="Liberation Sans, sans-serif" font-weight="bold" font-size="12.4" letter-spacing=".82" fill="#0d3d75" stroke="#0d3d75" stroke-width=".5">ASCENT</text>
<text transform="translate(.5 36.85) scale(1.12 1)" font-family="Liberation Serif, serif" font-weight="bold" font-size="4.1" letter-spacing=".9" fill="#a6c9e8" stroke="#a6c9e8" stroke-width=".25">GLOBAL LOGISTICS</text>
</svg>
</body>
</html>
